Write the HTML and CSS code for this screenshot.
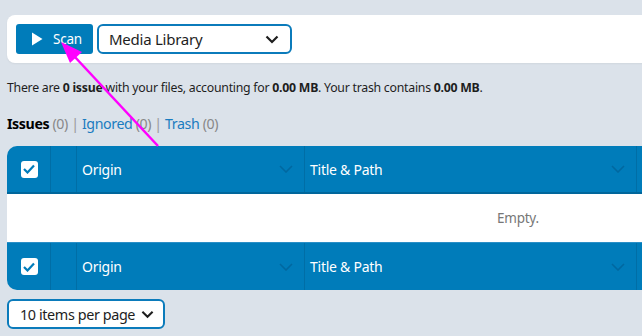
FILE: index.html
```html
<!DOCTYPE html>
<html lang="en">
<head>
    <meta charset="UTF-8">
    <meta name="viewport" content="width=device-width, initial-scale=1.0">
    <title>Media Cleaner</title>
    <link rel="stylesheet" href="styles.css">
</head>
<body>

    <div class="toolbar">
        <button class="scan-btn">
            <svg width="12" height="14" viewBox="0 0 12 14"><path d="M1 0.5 L11.5 7 L1 13.5 Z" fill="#fff"/></svg>
            <span>Scan</span>
        </button>
        <div class="select source-select">
            <span>Media Library</span>
            <svg class="chev" width="14" height="9" viewBox="0 0 14 9"><path d="M1.5 1.5 L7 7 L12.5 1.5" fill="none" stroke="#1e1e1e" stroke-width="2.2"/></svg>
        </div>
    </div>

    <p class="summary">There are <b>0 issue</b> with your files, accounting for <b>0.00 MB</b>. Your trash contains <b>0.00 MB</b>.</p>

    <div class="tabs">
        <span class="current">Issues</span> <span class="count">(0)</span>
        <span class="sep">|</span>
        <a href="#">Ignored</a> <span class="count">(0)</span>
        <span class="sep">|</span>
        <a href="#">Trash</a> <span class="count">(0)</span>
    </div>

    <div class="table">
        <div class="row head">
            <div class="cell c-check"><span class="checkbox"><svg width="12" height="10" viewBox="0 0 12 10"><path d="M1 5 L4.5 8.5 L11 1.5" fill="none" stroke="#007cba" stroke-width="2.2"/></svg></span></div>
            <div class="cell c-thumb"></div>
            <div class="cell c-origin">Origin <svg class="sort" width="14" height="8" viewBox="0 0 14 8"><path d="M1 1 L7 7 L13 1" fill="none" stroke="#0068a0" stroke-width="1.6"/></svg></div>
            <div class="cell c-title">Title &amp; Path <svg class="sort" width="14" height="8" viewBox="0 0 14 8"><path d="M1 1 L7 7 L13 1" fill="none" stroke="#0068a0" stroke-width="1.6"/></svg></div>
            <div class="cell c-rest"></div>
        </div>
        <div class="row empty">Empty.</div>
        <div class="row foot">
            <div class="cell c-check"><span class="checkbox"><svg width="12" height="10" viewBox="0 0 12 10"><path d="M1 5 L4.5 8.5 L11 1.5" fill="none" stroke="#007cba" stroke-width="2.2"/></svg></span></div>
            <div class="cell c-thumb"></div>
            <div class="cell c-origin">Origin <svg class="sort" width="14" height="8" viewBox="0 0 14 8"><path d="M1 1 L7 7 L13 1" fill="none" stroke="#0068a0" stroke-width="1.6"/></svg></div>
            <div class="cell c-title">Title &amp; Path <svg class="sort" width="14" height="8" viewBox="0 0 14 8"><path d="M1 1 L7 7 L13 1" fill="none" stroke="#0068a0" stroke-width="1.6"/></svg></div>
            <div class="cell c-rest"></div>
        </div>
    </div>

    <div class="select per-page">
        <span>10 items per page</span>
        <svg class="chev" width="13" height="9" viewBox="0 0 14 9"><path d="M1.5 1.5 L7 7 L12.5 1.5" fill="none" stroke="#1e1e1e" stroke-width="2.2"/></svg>
    </div>

    <!-- annotation arrow -->
    <svg class="arrow" width="642" height="336" viewBox="0 0 642 336">
        <line x1="158" y1="146" x2="74" y2="56" stroke="#f0f" stroke-width="2.5"/>
        <path d="M61 42 L82 52 L70 63 Z" fill="#f0f"/>
    </svg>

</body>
</html>
```

FILE: styles.css
```css
body {
    margin: 0;
    padding: 15px 0 0 7px;
    background: #dbe2ea;
    font-family: "Noto Sans", "Open Sans", Arial, sans-serif;
    color: #1e1e1e;
    overflow: hidden;
    width: 635px;
    height: 321px;
    letter-spacing: -0.25px;
}
.toolbar {
    background: #fff;
    border-radius: 8px 0 0 8px;
    padding: 9px;
    height: 30px;
    display: flex;
    gap: 4px;
    width: 700px;
    box-shadow: 0 1px 2px rgba(0, 0, 0, 0.05);
}
.scan-btn {
    background: #007cba;
    border: none;
    border-radius: 3px;
    width: 77px;
    height: 30px;
    display: flex;
    align-items: center;
    gap: 10px;
    padding: 0 0 0 15px;
    color: #fff;
    font-family: inherit;
    font-size: 13.5px;
    letter-spacing: -0.2px;
}
.select {
    box-sizing: border-box;
    border: 2px solid #0b7bbb;
    border-radius: 6px;
    background: #fff;
    display: flex;
    align-items: center;
    justify-content: space-between;
    font-size: 15px;
    white-space: nowrap;
}
.source-select {
    width: 195px;
    height: 30px;
    padding: 0 11px 0 10px;
}
.summary {
    margin: 16px 0 0;
    font-size: 12.3px;
    line-height: 17px;
}
.tabs {
    margin-top: 18px;
    font-size: 14.2px;
    line-height: 20px;
    color: #888;
    letter-spacing: -0.4px;
}
.tabs .current { color: #000; font-weight: bold; }
.tabs a { color: #1a7cc0; text-decoration: none; }
.tabs .sep { color: #999; }
.table {
    margin-top: 12px;
    width: 1020px;
}
.row {
    display: flex;
    height: 48px;
    box-sizing: border-box;
}
.head, .foot {
    background: #007cba;
    color: #fff;
    font-size: 14px;
    border-bottom: 2px solid #00669b;
}
.head { border-radius: 10px 0 0 0; height: 48px; }
.foot { border-radius: 0 0 0 10px; border-top: 1px solid #2a8fc7; border-bottom: none; }
.cell {
    display: flex;
    align-items: center;
    border-right: 1px solid #006ea6;
    box-sizing: border-box;
}
.c-check { width: 44px; justify-content: center; padding-left: 1px; }
.c-thumb { width: 26px; }
.c-origin { width: 228px; padding: 0 11px 0 5px; justify-content: space-between; }
.c-title { width: 332px; padding: 0 11px 0 5px; justify-content: space-between; }
.c-rest { flex: 1; border-right: none; }
.checkbox {
    width: 17px;
    height: 17px;
    background: #fff;
    border-radius: 3px;
    display: flex;
    align-items: center;
    justify-content: center;
}
.empty {
    background: #fff;
    color: #777;
    font-size: 13.5px;
    align-items: center;
    padding-left: 490px;
}
.per-page {
    margin-top: 9px;
    width: 158px;
    height: 30px;
    padding: 0 9px 0 11px;
    font-size: 14.4px;
    letter-spacing: -0.4px;
}
.arrow {
    position: absolute;
    left: 0;
    top: 0;
    pointer-events: none;
}
```
